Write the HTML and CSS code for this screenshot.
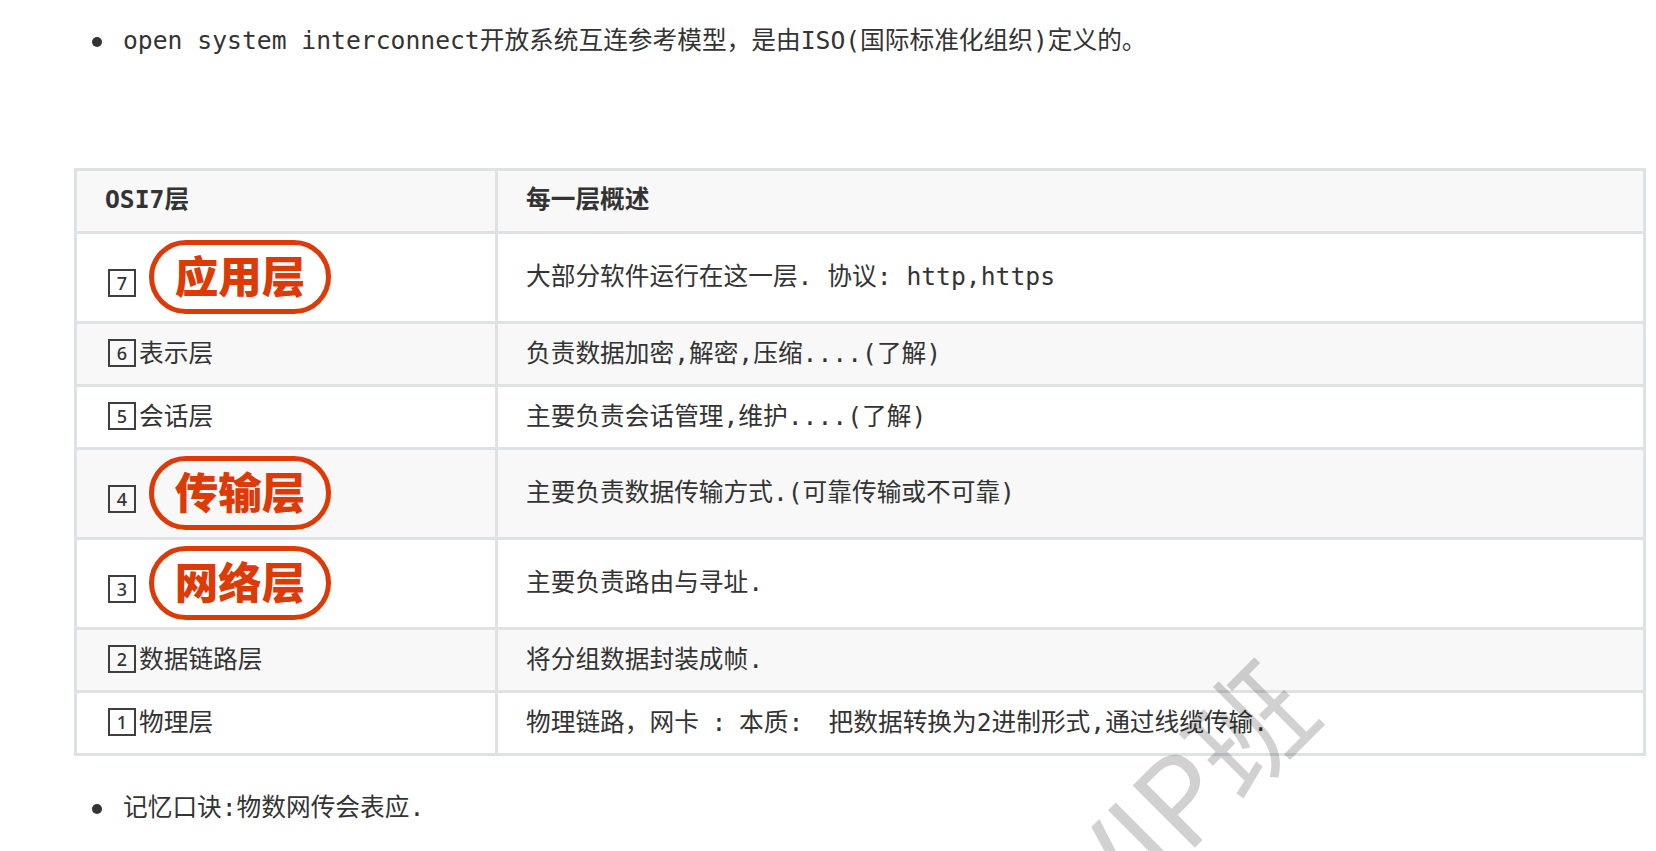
FILE: index.html
```html
<!DOCTYPE html>
<html lang="zh-CN">
<head>
<meta charset="utf-8">
<title>OSI7层</title>
<link rel="stylesheet" href="styles.css">
</head>
<body>
<main class="doc">
  <ul class="list list-top">
    <li>open system interconnect开放系统互连参考模型，是由ISO(国际标准化组织)定义的。</li>
  </ul>
  <table class="osi">
    <thead>
      <tr><th class="col-a">OSI7层</th><th>每一层概述</th></tr>
    </thead>
    <tbody>
      <tr class="tall">
        <td><div class="layer"><span class="num num-low">7</span><span class="pill">应用层</span></div></td>
        <td>大部分软件运行在这一层. 协议: http,https</td>
      </tr>
      <tr class="alt">
        <td><div class="layer"><span class="num">6</span>表示层</div></td>
        <td>负责数据加密,解密,压缩....(了解)</td>
      </tr>
      <tr>
        <td><div class="layer"><span class="num">5</span>会话层</div></td>
        <td>主要负责会话管理,维护....(了解)</td>
      </tr>
      <tr class="tall alt">
        <td><div class="layer"><span class="num num-low">4</span><span class="pill">传输层</span></div></td>
        <td>主要负责数据传输方式.(可靠传输或不可靠)</td>
      </tr>
      <tr class="tall">
        <td><div class="layer"><span class="num num-low">3</span><span class="pill">网络层</span></div></td>
        <td>主要负责路由与寻址.</td>
      </tr>
      <tr class="alt">
        <td><div class="layer"><span class="num">2</span>数据链路层</div></td>
        <td>将分组数据封装成帧.</td>
      </tr>
      <tr>
        <td><div class="layer"><span class="num">1</span>物理层</div></td>
        <td class="tight">物理链路，网卡 : 本质:  把数据转换为2进制形式,通过线缆传输.</td>
      </tr>
    </tbody>
  </table>
  <ul class="list list-bottom">
    <li>记忆口诀:物数网传会表应.</li>
  </ul>
</main>
<div class="watermark">VIP班</div>
</body>
</html>
```
FILE: styles.css
```css
html, body {
  margin: 0;
  padding: 0;
  height: 851px;
  overflow: hidden;
  background: #fff;
}

body {
  position: relative;
  color: #333;
  font-family: "DejaVu Sans Mono", "Noto Sans CJK SC", monospace;
  font-size: 24.7px;
}

.doc {
  padding: 23px 10px 0 74px;
}

.list {
  margin: 0;
  padding: 0 0 0 49px;
  line-height: 36px;
  list-style: none;
}

.list li {
  position: relative;
}

.list li::before {
  content: "";
  position: absolute;
  left: -31px;
  top: 14px;
  width: 10px;
  height: 10px;
  border-radius: 50%;
  background: #333;
}

.list-bottom {
  margin-top: 34px;
}

.osi {
  width: 1572px;
  margin-top: 109px;
  border-collapse: collapse;
  table-layout: fixed;
}

.osi th,
.osi td {
  border: 3px solid #dfe2e5;
  padding: 13px 28px 14px;
  line-height: 33px;
  text-align: left;
  white-space: pre;
  height: 33px;
  box-sizing: content-box;
}

.osi th {
  padding-top: 12px;
  padding-bottom: 15px;
  font-weight: 700;
  background: #f8f8f8;
}

.col-a {
  width: 362px;
}

.osi .alt td {
  background: #f8f8f8;
}

.osi .tall td {
  padding-top: 6px;
  padding-bottom: 7px;
  height: 74px;
}

.osi .tall td:last-child {
  padding-bottom: 9px;
  height: 72px;
}

.osi .tight {
  word-spacing: -2.2px;
}

.layer {
  display: flex;
  align-items: center;
  margin-left: 3px;
}

.num {
  display: flex;
  align-items: center;
  justify-content: center;
  width: 28px;
  height: 28px;
  box-sizing: border-box;
  border: 2px solid #3f3f3f;
  margin-right: 3px;
  margin-bottom: 2px;
  font-family: "Noto Sans", sans-serif;
  font-size: 18px;
  font-weight: 500;
  line-height: 1;
}

.num-low {
  margin-top: 12px;
  margin-right: 13px;
  margin-bottom: 0;
}

.pill {
  display: flex;
  align-items: center;
  justify-content: center;
  width: 182px;
  height: 74px;
  box-sizing: border-box;
  border: 5px solid #dc3a06;
  border-radius: 37px;
  padding-bottom: 4px;
  color: #dc3a06;
  font-family: "Noto Sans CJK SC", sans-serif;
  font-size: 43.5px;
  font-weight: 900;
  line-height: 1;
}

.watermark {
  position: absolute;
  left: 1032px;
  top: 727px;
  color: rgba(0, 0, 0, 0.18);
  font-family: "Noto Sans CJK SC", sans-serif;
  font-size: 120px;
  font-weight: 400;
  line-height: 1;
  white-space: nowrap;
  transform: rotate(-45deg);
  pointer-events: none;
}
```
